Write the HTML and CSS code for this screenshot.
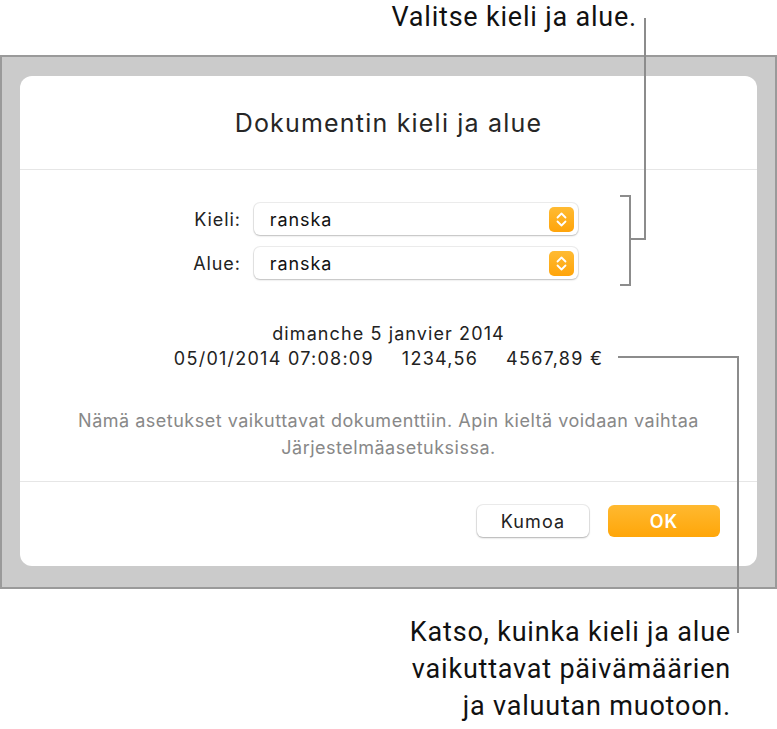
FILE: index.html
```html
<!DOCTYPE html>
<html lang="fi">
<head>
    <meta charset="UTF-8">
    <meta name="viewport" content="width=device-width, initial-scale=1.0">
    <title>Dokumentin kieli ja alue</title>
    <link rel="stylesheet" href="styles.css">
</head>
<body>

<div class="page">
    <div class="callout callout-top">Valitse kieli ja alue.</div>

    <div class="frame">
        <div class="dialog">
            <div class="dialog-header">Dokumentin kieli ja alue</div>

            <div class="dialog-body">
                <div class="form-grid">
                    <label class="form-label" for="lang">Kieli:</label>
                    <div class="popup" id="lang">
                        <span>ranska</span>
                        <span class="stepper">
                            <svg width="25" height="25" viewBox="0 0 25 25">
                                <path d="M8.5 10.5 L12.5 6.5 L16.5 10.5 M8.5 14.5 L12.5 18.5 L16.5 14.5" fill="none" stroke="#fff" stroke-width="1.8" stroke-linecap="round" stroke-linejoin="round"/>
                            </svg>
                        </span>
                    </div>

                    <label class="form-label" for="region">Alue:</label>
                    <div class="popup" id="region">
                        <span>ranska</span>
                        <span class="stepper">
                            <svg width="25" height="25" viewBox="0 0 25 25">
                                <path d="M8.5 10.5 L12.5 6.5 L16.5 10.5 M8.5 14.5 L12.5 18.5 L16.5 14.5" fill="none" stroke="#fff" stroke-width="1.8" stroke-linecap="round" stroke-linejoin="round"/>
                            </svg>
                        </span>
                    </div>
                </div>

                <div class="sample">
                    <div>dimanche 5 janvier 2014</div>
                    <div class="sample-row">
                        <span>05/01/2014 07:08:09</span>
                        <span>1234,56</span>
                        <span>4567,89 €</span>
                    </div>
                </div>

                <p class="note">Nämä asetukset vaikuttavat dokumenttiin. Apin kieltä voidaan vaihtaa<br>Järjestelmäasetuksissa.</p>
            </div>

            <div class="dialog-footer">
                <button class="btn">Kumoa</button>
                <button class="btn btn-primary">OK</button>
            </div>
        </div>
    </div>

    <div class="callout callout-bottom">
        Katso, kuinka kieli ja alue<br>
        vaikuttavat päivämäärien<br>
        ja valuutan muotoon.
    </div>

    <!-- leader lines for the callouts -->
    <svg class="leaders" width="777" height="729" viewBox="0 0 777 729">
        <g fill="none" stroke="#8c8c8c" stroke-width="2">
            <path d="M645 18 V239 H630"/>
            <path d="M620 196 H630 V285 H620"/>
            <path d="M618 357 H738 V633"/>
        </g>
    </svg>
</div>

</body>
</html>
```

FILE: styles.css
```css
body {
    margin: 0;
    background-color: #fff;
    font-family: Inter, "Noto Sans", Arial, sans-serif;
    color: #222;
}

.page {
    position: relative;
    width: 777px;
    height: 729px;
}

.callout {
    font-family: Roboto, "Liberation Sans", Arial, sans-serif;
    font-size: 27px;
    color: #111;
    text-align: right;
    letter-spacing: 0.8px;
}

.callout-top {
    height: 55px;
    line-height: 34px;
    padding-right: 140px;
    box-sizing: border-box;
}

.callout-bottom {
    margin-top: 25px;
    line-height: 37px;
    padding-right: 46px;
}

.frame {
    background-color: #cbcbcb;
    border: 2px solid #9a9a9a;
    padding: 19px 18px 21px;
}

.dialog {
    background-color: #fff;
    border-radius: 12px;
    height: 490px;
    display: flex;
    flex-direction: column;
}

.dialog-header {
    height: 93px;
    display: flex;
    align-items: center;
    justify-content: center;
    font-size: 25px;
    letter-spacing: 1.2px;
    color: #262626;
    border-bottom: 1px solid #e6e6e6;
}

.dialog-body {
    height: 312px;
    padding-top: 33px;
    box-sizing: border-box;
    border-bottom: 1px solid #e6e6e6;
    text-align: center;
}

.form-grid {
    display: grid;
    grid-template-columns: auto 324px;
    justify-content: center;
    align-items: center;
    column-gap: 13px;
    row-gap: 12px;
    margin-right: 6px;
}

.form-label {
    text-align: right;
    font-size: 18px;
    letter-spacing: 0.9px;
    color: #222;
}

.popup {
    height: 32px;
    display: flex;
    align-items: center;
    justify-content: space-between;
    padding: 0 4px 0 16px;
    border-radius: 6px;
    background-color: #fff;
    box-shadow: 0 0 0 1px rgba(0, 0, 0, 0.07), 0 1px 2px rgba(0, 0, 0, 0.2);
    font-size: 18px;
    letter-spacing: 0.9px;
    color: #111;
    text-align: left;
}

.stepper {
    width: 25px;
    height: 25px;
    border-radius: 5px;
    background: linear-gradient(#ffbb33, #ffa40a);
    display: flex;
}

.sample {
    margin-top: 42px;
    font-size: 18px;
    letter-spacing: 1.1px;
    line-height: 25px;
    color: #222;
}

.sample-row {
    display: flex;
    justify-content: center;
    gap: 28px;
    letter-spacing: 1.25px;
}

.note {
    margin: 36px 0 0;
    font-size: 18px;
    letter-spacing: 0.5px;
    line-height: 27px;
    color: #888;
}

.dialog-footer {
    flex: 1;
    display: flex;
    justify-content: flex-end;
    align-items: flex-start;
    gap: 19px;
    padding: 23px 37px 0 0;
}

.btn {
    width: 112px;
    height: 32px;
    border: none;
    border-radius: 6px;
    background-color: #fff;
    box-shadow: 0 0 0 1px rgba(0, 0, 0, 0.07), 0 1px 2px rgba(0, 0, 0, 0.25);
    font-family: inherit;
    font-size: 18px;
    letter-spacing: 1.1px;
    color: #222;
    cursor: pointer;
}

.btn-primary {
    background: linear-gradient(#ffb930, #ffa609);
    box-shadow: none;
    color: #fff;
    font-weight: 600;
}

.leaders {
    position: absolute;
    top: 0;
    left: 0;
    pointer-events: none;
}
```
